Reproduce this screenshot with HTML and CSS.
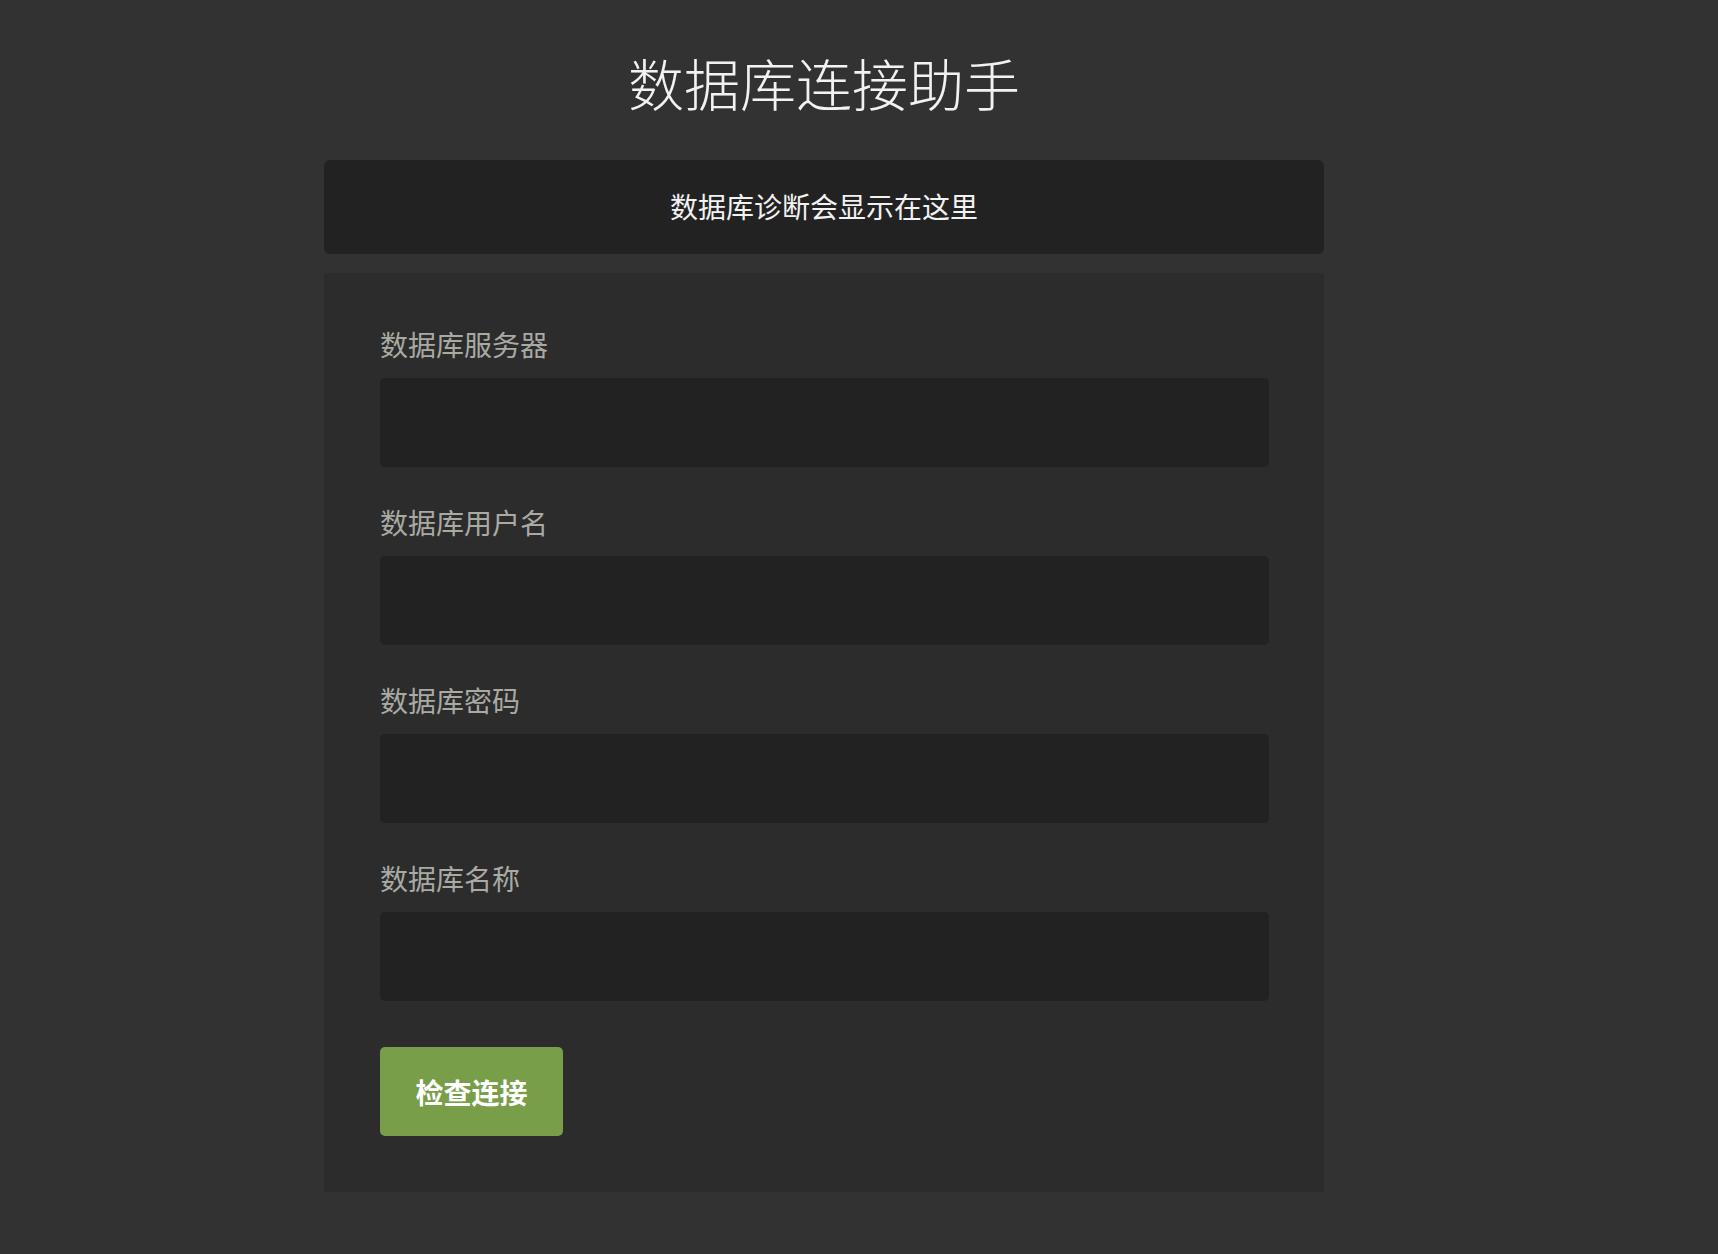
FILE: index.html
```html
<!DOCTYPE html>
<html lang="zh">
<head>
    <meta charset="UTF-8">
    <meta name="viewport" content="width=device-width, initial-scale=1.0">
    <title>数据库连接助手</title>
    <link rel="stylesheet" href="styles.css">
</head>
<body>
    <div class="page">
        <div class="container">
            <h1>数据库连接助手</h1>
            <div class="diagnosis" id="diagnosis">数据库诊断会显示在这里</div>
            <form class="panel" id="dbForm">
                <div class="form-group">
                    <label for="server">数据库服务器</label>
                    <input type="text" id="server">
                </div>
                <div class="form-group">
                    <label for="user">数据库用户名</label>
                    <input type="text" id="user">
                </div>
                <div class="form-group">
                    <label for="password">数据库密码</label>
                    <input type="password" id="password">
                </div>
                <div class="form-group">
                    <label for="dbname">数据库名称</label>
                    <input type="text" id="dbname">
                </div>
                <button type="submit" class="check-btn">检查连接</button>
            </form>
        </div>
    </div>
</body>
</html>
```

FILE: styles.css
```css
* {
    margin: 0;
    padding: 0;
    box-sizing: border-box;
}

html, body {
    background-color: #323232;
    min-height: 100%;
}

body {
    font-family: "Noto Sans CJK SC", "Noto Sans", sans-serif;
    color: #f0f0f0;
}

.page {
    padding: 48px 70px 63px 0;
}

.container {
    width: 1000px;
    margin: 0 auto;
}

h1 {
    text-align: center;
    font-size: 56px;
    font-weight: 200;
    line-height: 67px;
    color: #f2f2f2;
    margin-bottom: 45px;
}

.diagnosis {
    background: #222;
    border-radius: 6px;
    padding: 26px 20px 27px;
    line-height: 41px;
    font-size: 28px;
    text-align: center;
    color: #f2f2f2;
    margin-bottom: 19px;
}

.panel {
    background: #2c2c2c;
    border-radius: 3px;
    padding: 51px 55px 56px 56px;
}

.form-group {
    margin-bottom: 35px;
}

.form-group:last-of-type {
    margin-bottom: 46px;
}

label {
    display: block;
    font-size: 28px;
    line-height: 40px;
    color: #a9aaa4;
    margin-bottom: 14px;
}

input {
    display: block;
    width: 100%;
    height: 89px;
    background: #222;
    border: none;
    border-radius: 5px;
    padding: 0 20px;
    font-size: 26px;
    color: #eee;
    font-family: inherit;
}

input:focus {
    outline: none;
}

.check-btn {
    display: block;
    width: 183px;
    height: 89px;
    background: #789e4a;
    color: #fff;
    border: none;
    border-radius: 5px;
    font-family: inherit;
    font-size: 28px;
    font-weight: 700;
    cursor: pointer;
}
```
